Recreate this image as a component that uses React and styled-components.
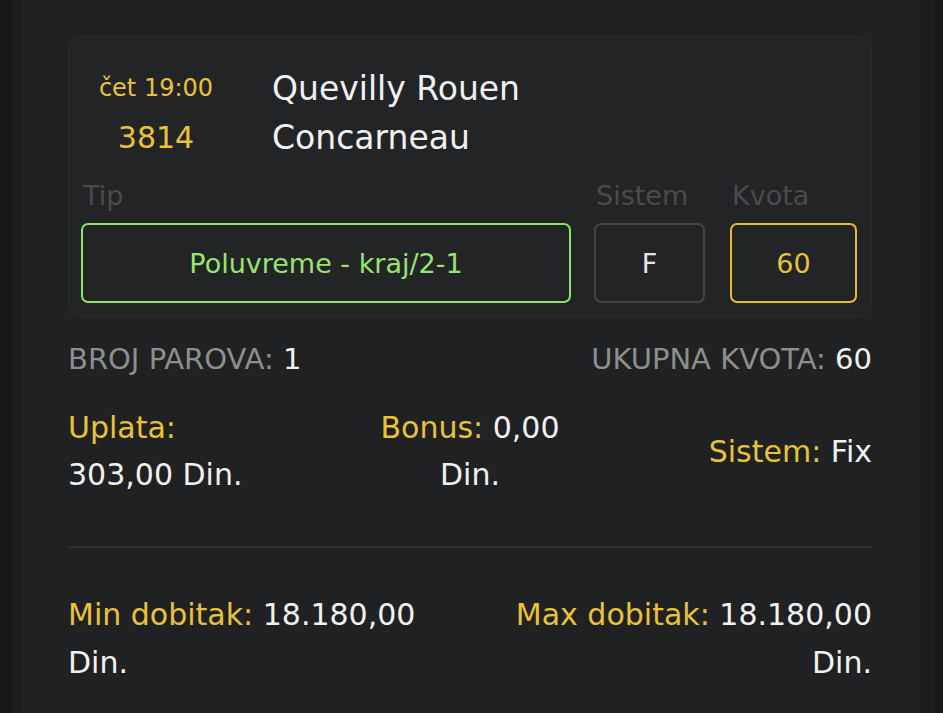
import React from 'react'
import styled, { createGlobalStyle } from 'styled-components'

const GlobalStyle = createGlobalStyle`
  html, body {
    margin: 0;
    padding: 0;
    background: #17181a;
  }
  body {
    font-family: "DejaVu Sans", "Noto Sans", sans-serif;
    -webkit-font-smoothing: antialiased;
  }
`;

const yellow = '#e8c23a';
const white = '#f1f1f1';

const Page = styled.div`
  min-height: 713px;
  padding: 0 8px 0 12px;
  display: flex;
`;

const Panel = styled.section`
  flex: 1;
  background: #202123;
  border-left: 10px solid #1c1d1f;
  border-right: 15px solid #1c1d1f;
  padding: 36px 48px 0 46px;
`;

const Card = styled.div`
  background: #232426;
  border: 1px solid #2b2c2e;
  border-radius: 13px;
  padding: 27px 12px 13px 12px;
`;

const Match = styled.div`
  display: grid;
  grid-template-columns: 150px 1fr;
  column-gap: 41px;
  line-height: 49px;
`;

const Time = styled.div`
  color: ${yellow};
  text-align: center;
  font-size: ${({ $size }) => $size}px;
`;

const Team = styled.div`
  color: ${white};
  font-size: 33px;
`;

const Fields = styled.div`
  display: grid;
  grid-template-columns: 490px 111px 129px;
  column-gap: 23px;
  margin-top: 14px;
  & > :nth-child(3) {
    margin-left: 2px;
  }
`;

const Field = styled.div`
  display: flex;
  flex-direction: column;
`;

const FieldLabel = styled.div`
  color: #4a4b4d;
  font-size: 27px;
  line-height: 40px;
  padding-left: ${({ $pad }) => $pad || 0}px;
  margin-bottom: 7px;
`;

const FieldBox = styled.div`
  height: 80px;
  box-sizing: border-box;
  border: 2px solid ${({ $border }) => $border};
  border-radius: 7px;
  display: flex;
  align-items: center;
  justify-content: center;
  color: ${({ $color }) => $color};
  font-size: 27px;
`;

const Summary = styled.div`
  display: flex;
  justify-content: space-between;
  margin-top: 22px;
  line-height: 40px;
  font-size: 29px;
  color: #8e8e8e;
  text-transform: uppercase;
`;

const Value = styled.span`
  color: ${white};
`;

const Label = styled.span`
  color: ${yellow};
`;

const Money = styled.div`
  display: grid;
  grid-template-columns: 1fr 1fr 1fr;
  margin-top: 25px;
  font-size: 30px;
  line-height: 47px;
  color: ${white};
`;

const Cell = styled.div`
  text-align: ${({ $align }) => $align};
  align-self: center;
  white-space: nowrap;
`;

const Line = styled.div``;

const Divider = styled.hr`
  border: none;
  height: 2px;
  background: #2c2d2f;
  margin: 48px 0 43px;
`;

const Wins = styled.div`
  display: grid;
  grid-template-columns: 1fr 1fr;
  font-size: 30px;
  line-height: 48px;
  color: ${white};
`;

export default function App() {
  return (
    <>
      <GlobalStyle />
      <Page>
        <Panel>
          <Card>
            <Match>
              <Time $size={24}>čet 19:00</Time>
              <Team>Quevilly Rouen</Team>
              <Time $size={30}>3814</Time>
              <Team>Concarneau</Team>
            </Match>
            <Fields>
              <Field>
                <FieldLabel $pad={2}>Tip</FieldLabel>
                <FieldBox $border="#8de06a" $color="#97e46f">Poluvreme - kraj/2-1</FieldBox>
              </Field>
              <Field>
                <FieldLabel $pad={2}>Sistem</FieldLabel>
                <FieldBox $border="#444547" $color="#e6e6e6">F</FieldBox>
              </Field>
              <Field>
                <FieldLabel $pad={2}>Kvota</FieldLabel>
                <FieldBox $border="#e6bd2e" $color={yellow}>60</FieldBox>
              </Field>
            </Fields>
          </Card>

          <Summary>
            <div>Broj parova: <Value>1</Value></div>
            <div>Ukupna kvota: <Value>60</Value></div>
          </Summary>

          <Money>
            <Cell $align="left">
              <Line><Label>Uplata:</Label></Line>
              <Line>303,00 Din.</Line>
            </Cell>
            <Cell $align="center">
              <Line><Label>Bonus:</Label> 0,00</Line>
              <Line>Din.</Line>
            </Cell>
            <Cell $align="right">
              <Line><Label>Sistem:</Label> Fix</Line>
            </Cell>
          </Money>

          <Divider />

          <Wins>
            <Cell $align="left">
              <Line><Label>Min dobitak:</Label> 18.180,00</Line>
              <Line>Din.</Line>
            </Cell>
            <Cell $align="right">
              <Line><Label>Max dobitak:</Label> 18.180,00</Line>
              <Line>Din.</Line>
            </Cell>
          </Wins>
        </Panel>
      </Page>
    </>
  )
}
